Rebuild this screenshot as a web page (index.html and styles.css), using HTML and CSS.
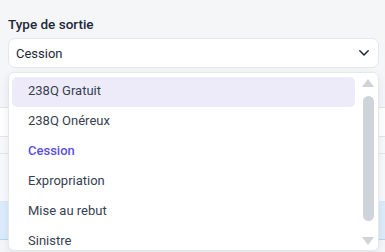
FILE: index.html
```html
<!DOCTYPE html>
<html lang="fr">
<head>
  <meta charset="UTF-8" />
  <title>Type de sortie</title>
  <link rel="stylesheet" href="styles.css">
</head>
<body>
  <div class="page">
    <div class="field">
      <label class="field-label">Type de sortie</label>
      <div class="select">
        <span>Cession</span>
        <svg class="chevron" width="12" height="8" viewBox="0 0 12 8">
          <path d="M1.8 1.8 L6 6 L10.2 1.8" fill="none" stroke="#1f2937" stroke-width="1.5" stroke-linecap="round" stroke-linejoin="round"/>
        </svg>
      </div>
    </div>
    <div class="table">
      <div class="row head"></div>
      <div class="row"></div>
      <div class="row alt"></div>
      <div class="row"></div>
      <div class="row selected"></div>
    </div>

    <div class="dropdown">
      <ul class="options">
        <li class="option hover">238Q Gratuit</li>
        <li class="option">238Q Onéreux</li>
        <li class="option active">Cession</li>
        <li class="option">Expropriation</li>
        <li class="option">Mise au rebut</li>
        <li class="option">Sinistre</li>
      </ul>
      <div class="scrollbar">
        <span class="arrow up"></span>
        <span class="thumb"></span>
        <span class="arrow down"></span>
      </div>
    </div>
  </div>
</body>
</html>
```

FILE: styles.css
```css
body {
  margin: 0;
  padding: 0;
  background: #f5f6f8;
  font-family: Roboto, "Noto Sans", Arial, sans-serif;
  color: #1f2937;
}
.page {
  position: relative;
  height: 252px;
  overflow: hidden;
}
.field {
  padding: 16px 6px 0 8px;
}
.field-label {
  display: block;
  font-size: 13.5px;
  font-weight: 500;
  color: #1e293b;
  line-height: 16px;
  margin-bottom: 6px;
}
.select {
  box-sizing: border-box;
  height: 30px;
  background: #fff;
  border: 1px solid #e3e7ee;
  border-radius: 7px;
  display: flex;
  align-items: center;
  justify-content: space-between;
  padding: 0 8px 0 7px;
  font-size: 13px;
  color: #1f2937;
}
.table {
  margin-top: 10px;
}
.row {
  height: 28px;
  border-bottom: 1px solid #e2e7ee;
  background: #fff;
}
.row.head {
  height: 29px;
  background: #f5f6f8;
}
.row.alt {
  height: 16px;
  background: #f8f9fb;
}
.row.selected {
  height: 37px;
  background: #dcecfb;
  border-bottom-color: #b9d6ef;
}
.row:nth-child(4) {
  height: 47px;
  background: #f8f9fb;
}

.dropdown {
  position: absolute;
  left: 8px;
  top: 72px;
  width: 371px;
  height: 179px;
  box-sizing: border-box;
  background: #fff;
  border: 1px solid #e3e7ee;
  border-radius: 6px;
  box-shadow: 0 3px 10px #0f172a14;
  display: flex;
  padding: 4px 4px 4px 3px;
}
.options {
  list-style: none;
  margin: 0;
  padding: 0;
  flex: 1;
}
.option {
  height: 30px;
  line-height: 28px;
  padding-left: 16px;
  font-size: 13px;
  color: #374151;
  border-radius: 5px;
}
.option.hover {
  background: #edebf9;
}
.option.active {
  color: #5a4fdf;
  font-weight: 500;
}
.scrollbar {
  width: 12px;
  margin-left: 7px;
  display: flex;
  flex-direction: column;
  align-items: center;
}
.arrow {
  width: 0;
  height: 0;
  border-left: 6px solid transparent;
  border-right: 6px solid transparent;
}
.arrow.up {
  margin-top: 2px;
  border-bottom: 8px solid #cfd3da;
}
.arrow.down {
  margin-top: auto;
  margin-bottom: 1px;
  border-top: 8px solid #cfd3da;
}
.thumb {
  width: 11px;
  height: 125px;
  margin-top: 9px;
  background: #cfd3da;
  border-radius: 6px;
}
```
